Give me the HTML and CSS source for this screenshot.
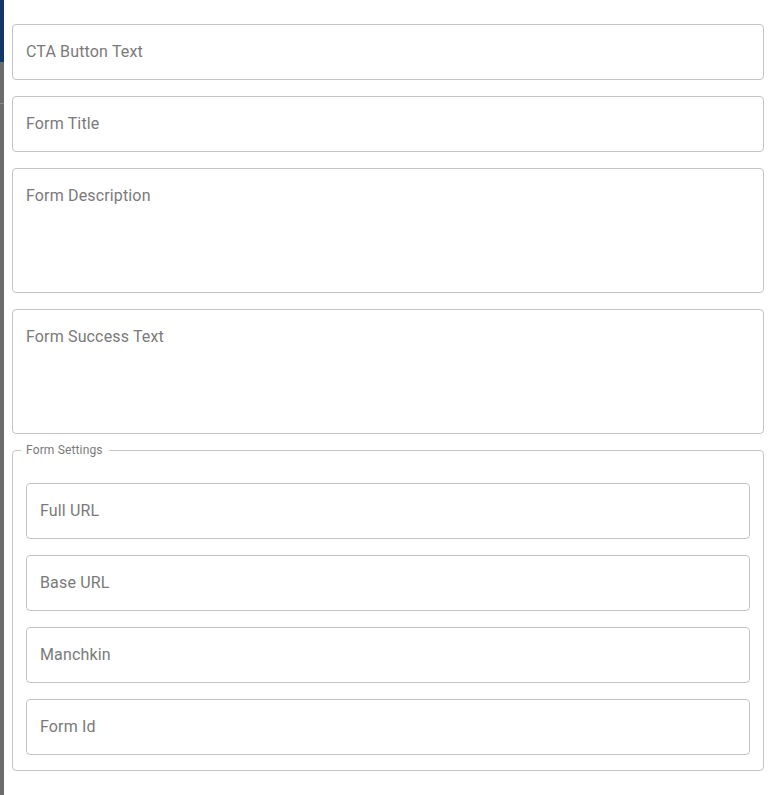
FILE: index.html
```html
<!DOCTYPE html>
<html lang="en">
<head>
<meta charset="utf-8">
<title>Form Settings</title>
<link rel="stylesheet" href="styles.css">
</head>
<body>
<div class="page">
  <div class="backdrop">
    <div class="backdrop-top"></div>
    <div class="backdrop-mid"></div>
    <div class="backdrop-rest"></div>
  </div>
  <div class="drawer">
    <div class="field"><span class="label">CTA Button Text</span></div>
    <div class="field"><span class="label">Form Title</span></div>
    <div class="field area"><span class="label">Form Description</span></div>
    <div class="field area"><span class="label">Form Success Text</span></div>
    <fieldset class="group">
      <legend class="legend">Form Settings</legend>
      <div class="field"><span class="label">Full URL</span></div>
      <div class="field"><span class="label">Base URL</span></div>
      <div class="field"><span class="label">Manchkin</span></div>
      <div class="field"><span class="label">Form Id</span></div>
    </fieldset>
  </div>
</div>
</body>
</html>
```
FILE: styles.css
```css
html, body {
  margin: 0;
  padding: 0;
  background: #ffffff;
}
body {
  font-family: Roboto, "Liberation Sans", sans-serif;
  width: 770px;
  height: 795px;
  overflow: hidden;
}
.page {
  display: flex;
  height: 795px;
}
.backdrop {
  width: 4px;
  flex: none;
  display: flex;
  flex-direction: column;
}
.backdrop-top {
  height: 62px;
  background: #12386a;
}
.backdrop-mid {
  height: 41px;
  background: #6c6c6c;
  border-bottom: 1px solid #8a8a8a;
}
.backdrop-rest {
  flex: 1;
  background: #6c6c6c;
}
.drawer {
  flex: 1;
  padding: 24px 6px 0 8px;
  display: flex;
  flex-direction: column;
  gap: 16px;
}
.field {
  box-sizing: border-box;
  height: 56px;
  border: 1px solid #c4c4c4;
  border-radius: 4px;
  padding: 17px 13px 0;
}
.field.area {
  height: 125px;
}
.label {
  font-size: 16px;
  line-height: 20px;
  letter-spacing: 0.15px;
  color: #7a7a7a;
}
.group {
  margin: -7px 0 0;
  border: 1px solid #c4c4c4;
  border-radius: 4px;
  padding: 26px 13px 15px 13px;
  display: flex;
  flex-direction: column;
  gap: 16px;
  min-width: 0;
}
.legend {
  font-size: 12px;
  line-height: 14px;
  letter-spacing: 0.15px;
  color: #7a7a7a;
  padding: 0 6px 0 5px;
  margin-left: -5px;
}
```
